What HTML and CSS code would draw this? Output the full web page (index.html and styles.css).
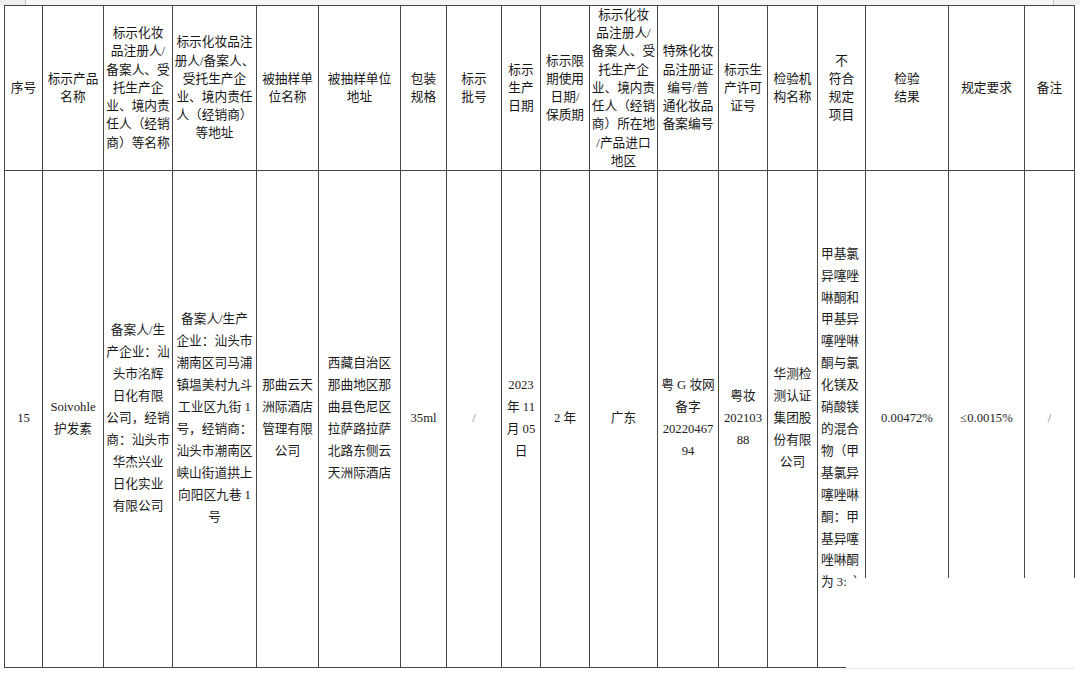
FILE: index.html
```html
<!DOCTYPE html>
<html lang="zh-CN">
<head>
<meta charset="utf-8">
<title>抽检结果</title>
<link rel="stylesheet" href="styles.css">
</head>
<body>
<div class="page">
  <div class="topbar"><div class="topbar-page"></div></div>
  <div class="sheet">
    <table class="grid">
      <colgroup>
        <col class="c38"><col class="c61"><col class="c69"><col class="c84"><col class="c62"><col class="c82">
        <col class="c46"><col class="c55"><col class="c39"><col class="c49"><col class="c68"><col class="c61">
        <col class="c49"><col class="c50"><col class="c48"><col class="c83"><col class="c76"><col class="c50">
      </colgroup>
      <thead>
        <tr class="head-row">
          <th>序号</th>
          <th>标示产品<br>名称</th>
          <th>标示化妆<br>品注册人/<br>备案人、受<br>托生产企<br>业、境内责<br>任人（经销<br>商）等名称</th>
          <th>标示化妆品注<br>册人/备案人、<br>受托生产企<br>业、境内责任<br>人（经销商）<br>等地址</th>
          <th>被抽样单<br>位名称</th>
          <th>被抽样单位<br>地址</th>
          <th>包装<br>规格</th>
          <th>标示<br>批号</th>
          <th>标示<br>生产<br>日期</th>
          <th>标示限<br>期使用<br>日期/<br>保质期</th>
          <th>标示化妆<br>品注册人/<br>备案人、受<br>托生产企<br>业、境内责<br>任人（经销<br>商）所在地<br>/产品进口<br>地区</th>
          <th>特殊化妆<br>品注册证<br>编号/普<br>通化妆品<br>备案编号</th>
          <th>标示生<br>产许可<br>证号</th>
          <th>检验机<br>构名称</th>
          <th>不<br>符合<br>规定<br>项目</th>
          <th>检验<br>结果</th>
          <th>规定要求</th>
          <th>备注</th>
        </tr>
      </thead>
      <tbody>
        <tr class="body-row">
          <td>15</td>
          <td>Soivohle<br>护发素</td>
          <td>备案人/生<br>产企业：汕<br>头市洺辉<br>日化有限<br>公司，经销<br>商：汕头市<br>华杰兴业<br>日化实业<br>有限公司</td>
          <td>备案人/生产<br>企业：汕头市<br>潮南区司马浦<br>镇塭美村九斗<br>工业区九街 1<br>号，经销商：<br>汕头市潮南区<br>峡山街道拱上<br>向阳区九巷 1<br>号</td>
          <td>那曲云天<br>洲际酒店<br>管理有限<br>公司</td>
          <td>西藏自治区<br>那曲地区那<br>曲县色尼区<br>拉萨路拉萨<br>北路东侧云<br>天洲际酒店</td>
          <td>35ml</td>
          <td class="muted">/</td>
          <td>2023<br>年 11<br>月 05<br>日</td>
          <td>2 年</td>
          <td>广东</td>
          <td>粤 G 妆网<br>备字<br>20220467<br>94</td>
          <td>粤妆<br>202103<br>88</td>
          <td>华测检<br>测认证<br>集团股<br>份有限<br>公司</td>
          <td class="tight">甲基氯<br>异噻唑<br>啉酮和<br>甲基异<br>噻唑啉<br>酮与氯<br>化镁及<br>硝酸镁<br>的混合<br>物（甲<br>基氯异<br>噻唑啉<br>酮：甲<br>基异噻<br>唑啉酮<br>为 3:1）</td>
          <td>0.00472%</td>
          <td>≤0.0015%</td>
          <td class="muted">/</td>
        </tr>
      </tbody>
    </table>
  </div>
  <div class="mask"></div>
</div>
</body>
</html>
```
FILE: styles.css
```css
html, body {
  margin: 0;
  padding: 0;
  background: #ffffff;
}

.page {
  position: relative;
  width: 1080px;
  height: 673px;
  overflow: hidden;
  font-family: "Liberation Serif", "Noto Sans CJK SC", sans-serif;
  font-size: 12.7px;
  color: #1c1c1c;
}

.topbar {
  height: 5px;
  background: #efefef;
  display: flex;
}

.topbar-page {
  margin-left: 25px;
  width: 1027px;
  height: 5px;
  background: #f6f6f6;
  border-left: 1px solid #c4c4c4;
  border-right: 1px solid #c4c4c4;
}

.sheet {
  padding-left: 4px;
}

.grid {
  border-collapse: collapse;
  table-layout: fixed;
  width: 1070px;
}

.grid th,
.grid td {
  border: 1px solid #454545;
  padding: 0;
  text-align: center;
  vertical-align: middle;
  white-space: nowrap;
  font-weight: normal;
  overflow: hidden;
}

.grid th {
  line-height: 18.2px;
  color: #161616;
}

.grid td {
  line-height: 21.9px;
}

.head-row {
  height: 165px;
}

.body-row {
  height: 497px;
}

.grid td.muted {
  color: #777777;
}

.grid td.tight {
  text-align: left;
  padding-left: 3px;
}

.c38 { width: 38px; }
.c39 { width: 39px; }
.c46 { width: 46px; }
.c48 { width: 48px; }
.c49 { width: 49px; }
.c50 { width: 50px; }
.c55 { width: 55px; }
.c61 { width: 61px; }
.c62 { width: 62px; }
.c68 { width: 68px; }
.c69 { width: 69px; }
.c76 { width: 76px; }
.c82 { width: 82px; }
.c83 { width: 83px; }
.c84 { width: 84px; }

.mask {
  position: absolute;
  left: 846px;
  top: 578px;
  width: 234px;
  height: 95px;
  background: #ffffff;
}

.mask::after {
  content: "";
  position: absolute;
  left: 0;
  top: 90px;
  width: 229px;
  height: 1px;
  background: #e6e6e6;
}
```
